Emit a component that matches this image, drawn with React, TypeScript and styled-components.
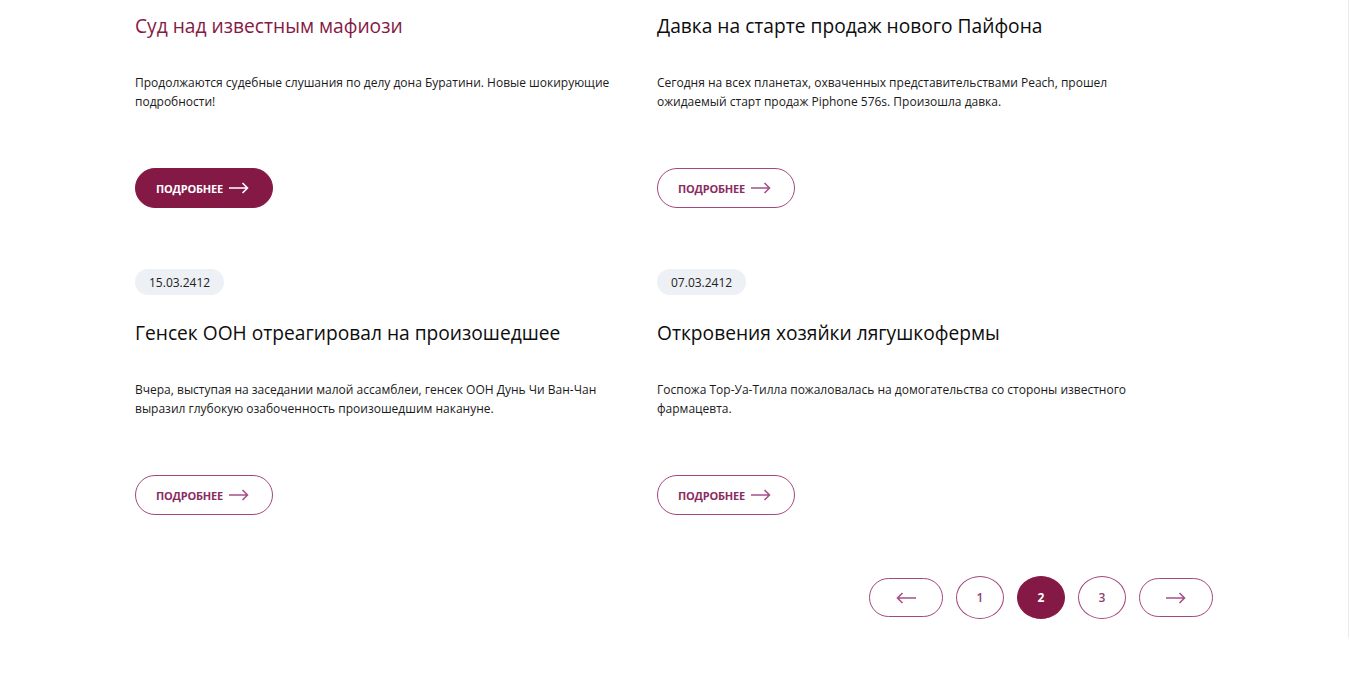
import React from "react";
import styled, { createGlobalStyle } from "styled-components";

const GlobalStyle = createGlobalStyle`
  html, body {
    margin: 0;
    padding: 0;
    background: #fff;
    overflow: hidden;
  }
  body {
    font-family: "Open Sans", "Noto Sans", Arial, sans-serif;
    color: #111;
  }
`;

interface NewsItem {
  date?: string;
  title: string;
  text: string;
  active?: boolean;
}

// first row's dates are scrolled out of view in the screenshot
const news: NewsItem[] = [
  {
    title: "Суд над известным мафиози",
    text: "Продолжаются судебные слушания по делу дона Буратини. Новые шокирующие подробности!",
    active: true,
  },
  {
    title: "Давка на старте продаж нового Пайфона",
    text: "Сегодня на всех планетах, охваченных представительствами Peach, прошел ожидаемый старт продаж Piphone 576s. Произошла давка.",
  },
  {
    date: "15.03.2412",
    title: "Генсек ООН отреагировал на произошедшее",
    text: "Вчера, выступая на заседании малой ассамблеи, генсек ООН Дунь Чи Ван-Чан выразил глубокую озабоченность произошедшим накануне.",
  },
  {
    date: "07.03.2412",
    title: "Откровения хозяйки лягушкофермы",
    text: "Госпожа Тор-Уа-Тилла пожаловалась на домогательства со стороны известного фармацевта.",
  },
];

const ArrowRight = () => (
  <svg width="20" height="12" viewBox="0 0 20 12" fill="none">
    <path d="M0 6H18.5M13.5 1L18.5 6L13.5 11" stroke="currentColor" strokeWidth="1.6" />
  </svg>
);

const ArrowLeft = () => (
  <svg width="20" height="12" viewBox="0 0 20 12" fill="none">
    <path d="M20 6H1.5M6.5 1L1.5 6L6.5 11" stroke="currentColor" strokeWidth="1.6" />
  </svg>
);

export default function App() {
  return (
    <>
      <GlobalStyle />
      <Viewport>
        <Container>
          <Grid>
            {news.map((item) => (
              <Card key={item.title}>
                {item.date && <DateTag>{item.date}</DateTag>}
                <Title active={item.active} withDate={!!item.date}>
                  {item.title}
                </Title>
                <Text>{item.text}</Text>
                <MoreButton active={item.active}>
                  Подробнее
                  <ArrowRight />
                </MoreButton>
              </Card>
            ))}
          </Grid>
          <Pagination>
            <ArrowButton aria-label="Назад">
              <ArrowLeft />
            </ArrowButton>
            <PageButton>1</PageButton>
            <PageButton current>2</PageButton>
            <PageButton>3</PageButton>
            <ArrowButton aria-label="Вперёд">
              <ArrowRight />
            </ArrowButton>
          </Pagination>
        </Container>
      </Viewport>
    </>
  );
}

const Viewport = styled.div`
  width: 1348px;
  height: 638px;
  border-right: 1px solid #ebebeb;
  overflow: hidden;
`;

const Container = styled.div`
  width: 1078px;
  margin: 0 auto;
  padding: 12px 0 20px;
`;

const Grid = styled.div`
  display: grid;
  grid-template-columns: repeat(2, 490px);
  column-gap: 32px;
  row-gap: 61px;
`;

const Card = styled.article`
  display: flex;
  flex-direction: column;
  align-items: flex-start;
`;

const DateTag = styled.span`
  display: inline-flex;
  align-items: center;
  height: 26px;
  padding: 0 14px;
  border-radius: 13px;
  background: #edf1f5;
  font-size: 12px;
  color: #222;
`;

const Title = styled.h3<{ active?: boolean; withDate?: boolean }>`
  margin: ${({ withDate }) => (withDate ? "24px" : "0")} 0 0;
  font-size: 19.2px;
  line-height: 28px;
  font-weight: 400;
  color: ${({ active }) => (active ? "#851945" : "#0d0d0d")};
`;

const Text = styled.p`
  margin: 33px 0 0;
  font-size: 12px;
  line-height: 19px;
  color: #1a1a1a;
  min-height: 38px;
`;

const MoreButton = styled.button<{ active?: boolean }>`
  display: flex;
  align-items: center;
  gap: 6px;
  width: 138px;
  height: 40px;
  margin-top: 57px;
  padding: 0 0 0 20px;
  border-radius: 20px;
  border: 1px solid ${({ active }) => (active ? "#851945" : "#a3477e")};
  background: ${({ active }) => (active ? "#851945" : "#fff")};
  color: ${({ active }) => (active ? "#fff" : "#8a2c63")};
  font-family: "Open Sans", sans-serif;
  font-size: 11px;
  font-weight: 700;
  text-transform: uppercase;
  letter-spacing: -0.2px;
  cursor: pointer;

  svg {
    color: ${({ active }) => (active ? "#fff" : "#a5508a")};
  }
`;

const Pagination = styled.nav`
  display: flex;
  justify-content: flex-end;
  align-items: center;
  gap: 13px;
  margin-top: 61px;
`;

const ArrowButton = styled.button`
  display: flex;
  align-items: center;
  justify-content: center;
  width: 74px;
  height: 39px;
  border-radius: 20px;
  border: 1px solid #a3477e;
  background: #fff;
  color: #a5508a;
  padding: 0;
  cursor: pointer;
`;

const PageButton = styled.button<{ current?: boolean }>`
  width: 48px;
  height: 43px;
  border-radius: 50%;
  border: 1px solid ${({ current }) => (current ? "#851945" : "#a3477e")};
  background: ${({ current }) => (current ? "#851945" : "#fff")};
  color: ${({ current }) => (current ? "#fff" : "#8a3f72")};
  font-family: "Open Sans", sans-serif;
  font-size: 12px;
  font-weight: ${({ current }) => (current ? 700 : 600)};
  padding: 0;
  cursor: pointer;
`;
